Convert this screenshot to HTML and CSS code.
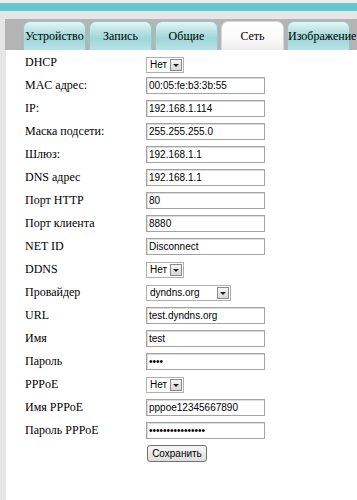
FILE: index.html
```html
<!DOCTYPE html>
<html>
<head>
<meta charset="utf-8">
<link rel="stylesheet" href="styles.css">
</head>
<body>
<div class="top"></div>
<div class="band"></div>
<div class="gap"></div>
<div class="frame">
  <div class="tabs">
    <div class="tab">Устройство</div>
    <div class="tab">Запись</div>
    <div class="tab">Общие</div>
    <div class="tab active">Сеть</div>
    <div class="tab">Изображение</div>
  </div>
  <div class="content">
    <div class="form">
      <div class="lbl">DHCP</div>
      <div class="ctl"><div class="sel short first"><span class="val">Нет</span><span class="arr"></span></div></div>
      <div class="lbl">MAC адрес:</div>
      <div class="ctl"><div class="inp">00:05:fe:b3:3b:55</div></div>
      <div class="lbl">IP:</div>
      <div class="ctl"><div class="inp">192.168.1.114</div></div>
      <div class="lbl">Маска подсети:</div>
      <div class="ctl"><div class="inp">255.255.255.0</div></div>
      <div class="lbl">Шлюз:</div>
      <div class="ctl"><div class="inp">192.168.1.1</div></div>
      <div class="lbl">DNS адрес</div>
      <div class="ctl"><div class="inp">192.168.1.1</div></div>
      <div class="lbl">Порт HTTP</div>
      <div class="ctl"><div class="inp">80</div></div>
      <div class="lbl">Порт клиента</div>
      <div class="ctl"><div class="inp">8880</div></div>
      <div class="lbl">NET ID</div>
      <div class="ctl"><div class="inp">Disconnect</div></div>
      <div class="lbl">DDNS</div>
      <div class="ctl"><div class="sel short"><span class="val">Нет</span><span class="arr"></span></div></div>
      <div class="lbl">Провайдер</div>
      <div class="ctl"><div class="sel long"><span class="val">dyndns.org</span><span class="arr"></span></div></div>
      <div class="lbl">URL</div>
      <div class="ctl"><div class="inp">test.dyndns.org</div></div>
      <div class="lbl">Имя</div>
      <div class="ctl"><div class="inp">test</div></div>
      <div class="lbl">Пароль</div>
      <div class="ctl"><div class="inp pw">••••</div></div>
      <div class="lbl">PPPoE</div>
      <div class="ctl"><div class="sel short"><span class="val">Нет</span><span class="arr"></span></div></div>
      <div class="lbl">Имя PPPoE</div>
      <div class="ctl"><div class="inp">pppoe12345667890</div></div>
      <div class="lbl">Пароль PPPoE</div>
      <div class="ctl"><div class="inp pw">••••••••••••••••</div></div>
      <div class="lbl"></div>
      <div class="ctl"><button class="btn">Сохранить</button></div>
    </div>
  </div>
</div>
</body>
</html>
```
FILE: styles.css
```css
html, body {
  margin: 0;
  padding: 0;
}
body {
  background: #e6e6e6;
  font-family: "Liberation Serif", "Times New Roman", serif;
  font-size: 12px;
  color: #000;
  width: 357px;
  height: 500px;
  overflow: hidden;
}
.top {
  height: 3px;
  background: #ececec;
}
.band {
  height: 8px;
  background: #63c7cf;
}
.gap {
  height: 8px;
  background: #e6e6e6;
}
.frame {
  margin-left: 5px;
}
.tabs {
  height: 31px;
  box-sizing: border-box;
  background: #b4b4b4;
  display: flex;
  gap: 3px;
  padding: 2px 0 0 18px;
}
.tab {
  width: 63px;
  flex: none;
  box-sizing: border-box;
  height: 29px;
  border-radius: 7px 7px 0 0;
  border: 1px solid #8fc9cc;
  border-bottom: none;
  background: linear-gradient(#e4f5f5 0%, #b6e2e4 35%, #9fd6d9 60%, #b9e3e5 100%);
  text-align: center;
  font-size: 12px;
  line-height: 29px;
  white-space: nowrap;
  overflow: visible;
}
.tab.active {
  background: linear-gradient(#ffffff 0%, #fafafa 60%, #eeeeee 100%);
  border-color: #d6d6d6;
}
.content {
  margin-left: 1px;
  background: #ffffff;
  height: 450px;
  box-sizing: border-box;
  padding: 4px 0 0 19px;
}
.form {
  display: grid;
  grid-template-columns: 121px 140px;
  grid-auto-rows: 23px;
}
.lbl {
  line-height: 15px;
  padding-top: 1px;
  white-space: nowrap;
}
.ctl {
  display: flex;
  align-items: flex-start;
}
.inp {
  width: 119px;
  height: 17px;
  box-sizing: border-box;
  border: 1px solid #a3a3a3;
  box-shadow: inset 1px 1px 0 #dcdcdc;
  background: #fff;
  font-family: "Liberation Sans", Arial, sans-serif;
  font-size: 10px;
  line-height: 15px;
  padding: 0 2px;
  white-space: nowrap;
  overflow: hidden;
}
.inp.pw {
  font-size: 10px;
  letter-spacing: 0;
}
.sel {
  margin-top: 1px;
  height: 16px;
  box-sizing: border-box;
  border: 1px solid #b0b0b0;
  background: #fff;
  display: flex;
  align-items: center;
  justify-content: space-between;
  font-family: "Liberation Sans", Arial, sans-serif;
  font-size: 10px;
}
.sel.first {
  margin-top: 3px;
}
.sel.short {
  width: 38px;
}
.sel.long {
  width: 85px;
}
.val {
  padding-left: 3px;
  line-height: 14px;
}
.arr {
  width: 12px;
  height: 12px;
  box-sizing: border-box;
  margin-right: 1px;
  border: 1px solid #8a8a8a;
  background: linear-gradient(#f4f4f4, #d8d8d8);
  position: relative;
}
.arr::after {
  content: "";
  position: absolute;
  left: 2px;
  top: 4px;
  border-left: 3px solid transparent;
  border-right: 3px solid transparent;
  border-top: 3px solid #222;
}
.btn {
  margin: 0 0 0 1px;
  height: 17px;
  width: 60px;
  padding: 0;
  border: 1px solid #707070;
  border-radius: 3px;
  background: linear-gradient(#f6f6f6, #dedede);
  font-family: "Liberation Sans", Arial, sans-serif;
  font-size: 10px;
  color: #000;
  line-height: 14px;
}
```
